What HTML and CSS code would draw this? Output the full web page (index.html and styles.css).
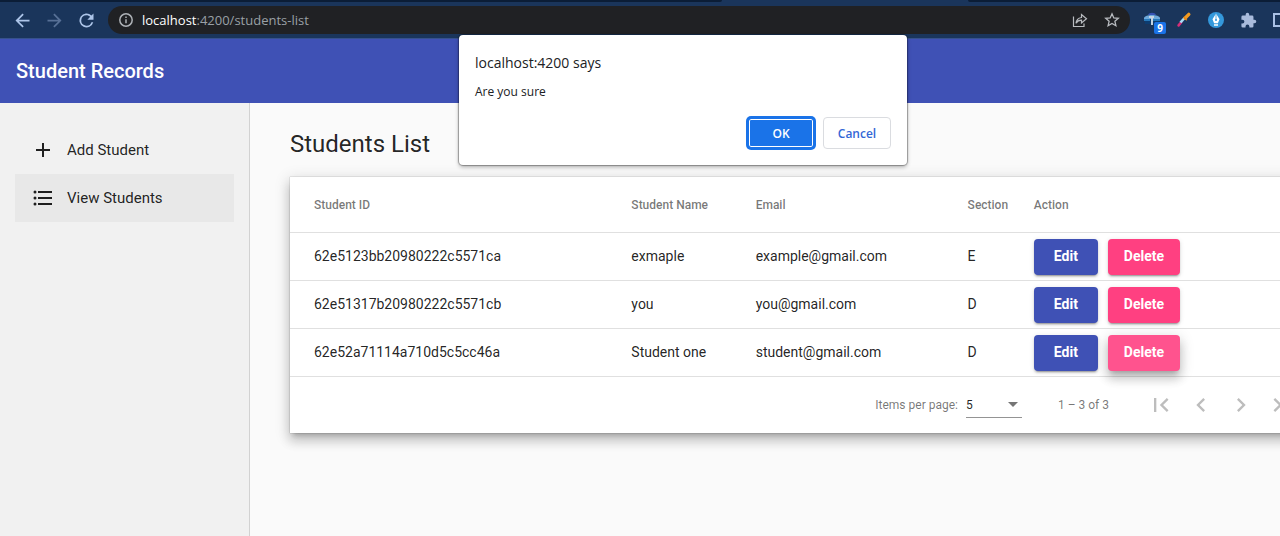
FILE: index.html
```html
<!DOCTYPE html>
<html lang="en">
<head>
<meta charset="utf-8">
<title>Student Records</title>
<link rel="stylesheet" href="styles.css">
</head>
<body>
<div class="window">
  <div class="tabstrip"><span class="tabs-before"></span><span class="tab-active"></span><span class="tabs-after"></span></div>
  <div class="browser-bar">
    <div class="nav-buttons">
      <button class="bar-button" aria-label="Back"><svg width="21" height="21" viewBox="0 0 24 24"><path fill="currentColor" d="M20 11H7.830l5.590-5.590L12 4l-8 8 8 8 1.410-1.410L7.830 13H20z"/></svg></button>
      <button class="bar-button bar-button-off" aria-label="Forward" disabled><svg width="21" height="21" viewBox="0 0 24 24"><path fill="currentColor" d="M12 4l-1.410 1.410L16.170 11H4v2h12.170l-5.580 5.590L12 20l8-8z"/></svg></button>
      <button class="bar-button" aria-label="Reload"><svg width="21" height="21" viewBox="0 0 24 24"><path fill="currentColor" d="M17.650 6.350A8 8 0 1 0 19.730 14h-2.080A6 6 0 1 1 12 6c1.660 0 3.140.69 4.220 1.780L13 11h7V4z"/></svg></button>
    </div>
    <div class="address">
      <svg width="16" height="16" viewBox="0 0 16 16" fill="none" stroke="#aeb2b7" stroke-width="1.500"><circle cx="8" cy="8" r="6.200"/><path d="M8 7.200v4M8 4.400v1.600"/></svg>
      <span class="url"><span class="url-host">localhost</span>:4200/students-list</span>
      <button class="address-icon" aria-label="Share"><svg width="16" height="16" viewBox="0 0 16 16" fill="none" stroke="currentColor" stroke-width="1.200"><path d="M1.500 4.500v10h10.500v-3"/><path d="M9.500 5.500V2.500l5 4.300-5 4.200V8.200C7 8.200 5.200 9.200 4 11.300c.3-3.300 2.200-5.300 5.500-5.800z"/></svg></button>
      <button class="address-icon" aria-label="Bookmark"><svg width="16" height="16" viewBox="0 0 16 16" fill="none" stroke="currentColor" stroke-width="1.300"><path d="M8 1.800l1.800 4.100 4.500.4-3.400 3 1 4.400L8 11.400l-3.900 2.300 1-4.400-3.400-3 4.500-.4z"/></svg></button>
    </div>
    <div class="extensions">
      <button class="bar-button" aria-label="Tab helper"><svg width="20" height="20" viewBox="0 0 20 20"><path fill="#3552b4" d="M6 5c1-3 7-3 8 0z"/><path fill="#6da9db" d="M2 8c1-4 15-4 16 0v1H2z"/><path fill="#0d3c70" d="M3 9h14v5H3z"/><path fill="#2779bb" d="M2 9h6v2H2zM11 9h7v2h-7z"/><path fill="#c4d3e2" d="M7 6h5v2h-1v7H9V8H7z"/></svg><span class="badge">9</span></button>
      <button class="bar-button" aria-label="Color picker"><svg width="20" height="20" viewBox="0 0 20 20"><path d="M4.600 15.400l2.600-3.200" stroke="#d62e78" stroke-width="2.600" stroke-linecap="round"/><path d="M6.500 12.500l4-4.500" stroke="#a8dcf5" stroke-width="2.600"/><path d="M11.200 8l3.600-3.600" stroke="#f29a1f" stroke-width="3.400" stroke-linecap="round"/><path d="M9.600 7l3.200 3.200" stroke="#e88417" stroke-width="1.300"/></svg></button>
      <button class="bar-button" aria-label="Pen"><svg width="20" height="20" viewBox="0 0 20 20"><circle cx="10" cy="10" r="8" fill="#3498db"/><path fill="#fff" d="M10 3.500l3.500 5.800-1.600 4H8.100l-1.600-4zM8 14.200h4v1.500H8z"/><path d="M10 4v6" stroke="#3498db" stroke-width=".8"/><circle cx="10" cy="10" r="1" fill="#3498db"/></svg></button>
      <button class="bar-button" aria-label="Extensions"><svg width="17" height="17" viewBox="0 0 24 24"><path fill="#a9bbdc" d="M20.500 11H19V7a2 2 0 0 0-2-2h-4V3.500a2.500 2.500 0 0 0-5 0V5H4a2 2 0 0 0-2 2v3.800h1.500a2.700 2.700 0 0 1 0 5.400H2V20a2 2 0 0 0 2 2h3.800v-1.500a2.700 2.700 0 0 1 5.400 0V22H17a2 2 0 0 0 2-2v-4h1.500a2.500 2.500 0 0 0 0-5z"/></svg></button>
      <button class="bar-button" aria-label="Side panel"><svg width="18" height="18" viewBox="0 0 18 18"><path d="M3 3h12v12H3zM11 3v12" fill="none" stroke="#a9c0e4" stroke-width="2"/></svg></button>
    </div>
  </div>

  <div class="app">
    <header class="app-header"><span class="app-title">Student Records</span></header>
    <div class="app-body">
      <nav class="sidebar">
        <a class="nav-link" href="#add"><svg width="24" height="24" viewBox="0 0 24 24"><path fill="currentColor" d="M19 13h-6v6h-2v-6H5v-2h6V5h2v6h6z"/></svg><span>Add Student</span></a>
        <a class="nav-link nav-link-active" href="#list"><svg width="24" height="24" viewBox="0 0 24 24"><path fill="currentColor" d="M7 5h14v2H7zM7 11h14v2H7zM7 17h14v2H7z"/><g fill="currentColor"><circle cx="4" cy="6" r="1.500"/><circle cx="4" cy="12" r="1.500"/><circle cx="4" cy="18" r="1.500"/></g></svg><span>View Students</span></a>
      </nav>
      <main class="content">
        <h1 class="page-title">Students List</h1>
        <section class="card">
          <table class="students">
            <colgroup><col class="col-id"><col class="col-name"><col class="col-email"><col class="col-section"><col></colgroup>
            <thead><tr><th>Student ID</th><th>Student Name</th><th>Email</th><th>Section</th><th>Action</th></tr></thead>
            <tbody>
              <tr><td>62e5123bb20980222c5571ca</td><td>exmaple</td><td>example@gmail.com</td><td>E</td><td class="cell-actions"><div class="actions"><button class="btn btn-edit">Edit</button><button class="btn btn-delete">Delete</button></div></td></tr>
              <tr><td>62e51317b20980222c5571cb</td><td>you</td><td>you@gmail.com</td><td>D</td><td class="cell-actions"><div class="actions"><button class="btn btn-edit">Edit</button><button class="btn btn-delete">Delete</button></div></td></tr>
              <tr><td>62e52a71114a710d5c5cc46a</td><td>Student one</td><td>student@gmail.com</td><td>D</td><td class="cell-actions"><div class="actions"><button class="btn btn-edit">Edit</button><button class="btn btn-delete btn-pressed">Delete</button></div></td></tr>
            </tbody>
          </table>
          <div class="paginator">
            <label for="page-size">Items per page:</label>
            <div class="page-size">
              <select id="page-size"><option>5</option><option>10</option><option>20</option></select>
              <svg class="caret" width="10" height="5" viewBox="0 0 10 5"><path fill="#757575" d="M0 0h10L5 5z"/></svg>
            </div>
            <span class="range">1 – 3 of 3</span>
            <button class="page-button" aria-label="First page" disabled><svg width="28" height="28" viewBox="0 0 24 24"><path fill="currentColor" d="M18.410 16.590L13.820 12l4.590-4.590L17 6l-6 6 6 6zM6 6h2v12H6z"/></svg></button>
            <button class="page-button" aria-label="Previous page" disabled><svg width="28" height="28" viewBox="0 0 24 24"><path fill="currentColor" d="M15.410 7.410L14 6l-6 6 6 6 1.410-1.410L10.830 12z"/></svg></button>
            <button class="page-button" aria-label="Next page" disabled><svg width="28" height="28" viewBox="0 0 24 24"><path fill="currentColor" d="M10 6L8.590 7.410 13.170 12l-4.580 4.590L10 18l6-6z"/></svg></button>
            <button class="page-button" aria-label="Last page" disabled><svg width="28" height="28" viewBox="0 0 24 24"><path fill="currentColor" d="M5.590 7.410L10.180 12l-4.590 4.590L7 18l6-6-6-6zM16 6h2v12h-2z"/></svg></button>
          </div>
        </section>
      </main>
    </div>
  </div>

  <div class="dialog" role="dialog" aria-labelledby="dialog-title">
    <h2 class="dialog-title" id="dialog-title">localhost:4200 says</h2>
    <p class="dialog-text">Are you sure</p>
    <div class="dialog-actions">
      <button class="dialog-button dialog-ok">OK</button>
      <button class="dialog-button">Cancel</button>
    </div>
  </div>
</div>
</body>
</html>
```

FILE: styles.css
```css
* { box-sizing: border-box; }

html, body { height: 100%; }

body {
  margin: 0;
  overflow: hidden;
  font-family: Roboto, "Liberation Sans", sans-serif;
  color: rgba(0, 0, 0, 0.87);
}

button {
  margin: 0;
  padding: 0;
  border: 0;
  background: none;
  font-family: inherit;
}

svg { display: block; flex: none; }

/* The window runs past the right edge of the viewport */
.window {
  position: relative;
  display: flex;
  flex-direction: column;
  width: calc(100% + 86px);
  min-height: 100%;
}

/* Browser chrome */
.tabstrip { display: flex; height: 2px; background: #1a355b; }
.tabs-before { flex: 722; background: #0b1d36; border-bottom-right-radius: 2px; }
.tab-active { flex: 246; }
.tabs-after { flex: 398; background: #0b1d36; border-bottom-left-radius: 2px; }

.browser-bar {
  display: flex;
  align-items: center;
  height: 37px;
  padding: 0 6px;
  background: #1a355b;
  border-bottom: 1px solid #36518c;
}

.nav-buttons, .extensions { display: flex; align-items: center; }
.nav-buttons { padding-right: 6px; }
.extensions { width: 230px; padding-left: 6px; }

.bar-button {
  position: relative;
  display: flex;
  align-items: center;
  justify-content: center;
  width: 32px;
  height: 28px;
  color: #adc5e9;
}
.bar-button-off { color: #577096; }

.badge {
  position: absolute;
  right: 2px;
  bottom: 0;
  width: 12px;
  border-radius: 2px;
  background: #1a73e8;
  color: #fff;
  font: 700 10px/12px "Open Sans", sans-serif;
  text-align: center;
}

.address {
  display: flex;
  flex: 1;
  align-items: center;
  height: 28px;
  padding: 0 10px;
  border-radius: 14px;
  background: #202124;
}
.url {
  flex: 1;
  padding-left: 8px;
  color: #9aa0a6;
  font: 13px/20px "Open Sans", "Noto Sans", sans-serif;
}
.url-host { color: #fff; }
.address-icon { margin-left: 16px; color: #b9bcc0; }

/* Application */
.app { display: flex; flex: 1; flex-direction: column; padding-right: 17px; }

.app-header {
  display: flex;
  align-items: center;
  height: 64px;
  margin-right: -17px;
  padding: 0 16px;
  background: #3f51b5;
  color: #fff;
}
.app-title { font-size: 20px; font-weight: 500; line-height: 32px; }

.app-body { display: flex; flex: 1; background: #fafafa; }

.sidebar {
  flex: none;
  width: 250px;
  padding: 23px 15px;
  border-right: 1px solid #d2d2d2;
  background: #f1f1f1;
}
.nav-link {
  display: flex;
  align-items: center;
  gap: 12px;
  height: 48px;
  padding: 0 16px;
  color: rgba(0, 0, 0, 0.87);
  font-size: 15px;
  text-decoration: none;
}
.nav-link-active { background: #e8e8e8; }

.content { flex: 1; padding: 25px 40px; }

.page-title { margin: 0 0 17px; font-size: 24px; font-weight: 400; line-height: 32px; }

.card {
  background: #fff;
  box-shadow: 0 5px 5px -3px rgba(0, 0, 0, 0.2), 0 8px 10px 1px rgba(0, 0, 0, 0.14), 0 3px 14px 2px rgba(0, 0, 0, 0.12), 0 0 1px rgba(0, 0, 0, 0.4);
}

.students { width: 100%; border-spacing: 0; table-layout: fixed; }
.col-id { width: 33.5%; }
.col-name { width: 12.2%; }
.col-email { width: 20.8%; }
.col-section { width: 6.5%; }

.students th, .students td {
  height: 48px;
  padding: 0 0 2px;
  border-bottom: 1px solid #e0e0e0;
  font-size: 14px;
  text-align: left;
  white-space: nowrap;
}
.students th { height: 56px; padding: 0; color: rgba(0, 0, 0, 0.54); font-size: 12px; font-weight: 500; }
.students th:first-child, .students td:first-child { padding-left: 24px; }
.students .cell-actions { padding: 0; }

.actions { display: flex; gap: 10px; }
.btn {
  height: 36px;
  padding: 0 16px 2px;
  border-radius: 4px;
  color: #fff;
  font-size: 14px;
  font-weight: 700;
  box-shadow: 0 3px 1px -2px rgba(0, 0, 0, 0.2), 0 2px 2px rgba(0, 0, 0, 0.14), 0 1px 5px rgba(0, 0, 0, 0.12);
}
.btn-edit { width: 64px; background: #3f51b5; }
.btn-delete { width: 72px; background: #ff4081; }
.btn-pressed {
  background: #ff538e;
  box-shadow: 0 5px 5px -3px rgba(0, 0, 0, 0.2), 0 8px 10px 1px rgba(0, 0, 0, 0.14), 0 3px 14px 2px rgba(0, 0, 0, 0.12);
}

.paginator {
  display: flex;
  align-items: center;
  justify-content: flex-end;
  height: 56px;
  padding-right: 8px;
  color: rgba(0, 0, 0, 0.54);
  font-size: 12px;
}
.page-size {
  display: grid;
  align-items: center;
  width: 56px;
  margin: 0 36px 0 8px;
  border-bottom: 1px solid #949494;
}
.page-size select {
  grid-area: 1 / 1;
  width: 100%;
  height: 24px;
  padding: 0;
  border: 0;
  background: none;
  color: rgba(0, 0, 0, 0.87);
  font: 12px Roboto, sans-serif;
  appearance: none;
}
.caret { grid-area: 1 / 1; justify-self: end; margin-right: 4px; pointer-events: none; }
.range { margin-right: 32px; }
.page-button {
  display: flex;
  align-items: center;
  justify-content: center;
  width: 40px;
  height: 40px;
  color: #bdbdbd;
}

/* Confirmation dialog, centred over the window */
.dialog {
  position: absolute;
  top: 35px;
  left: 0;
  right: 0;
  width: 448px;
  margin: 0 auto;
  padding: 16px;
  border-radius: 4px;
  background: #fff;
  color: #202124;
  font-family: "Open Sans", "Noto Sans", sans-serif;
  box-shadow: 0 0 1px 1px rgba(0, 0, 0, 0.3), 0 2px 4px rgba(0, 0, 0, 0.3);
}
.dialog-title { margin: 0 0 8px; font-size: 14px; font-weight: 400; line-height: 24px; }
.dialog-text { margin: 0 0 16px; font-size: 12px; line-height: 18px; }
.dialog-actions { display: flex; justify-content: flex-end; gap: 8px; }
.dialog-button {
  width: 68px;
  height: 32px;
  border: 1px solid #dadce0;
  border-radius: 4px;
  color: #3367d6;
  font-size: 12px;
  font-weight: 600;
}
.dialog-ok {
  border: 2px solid #1a73e8;
  background: #1a73e8;
  color: #fff;
  box-shadow: inset 0 0 0 1px #fff, 0 0 0 1px #1a73e8;
}
```
